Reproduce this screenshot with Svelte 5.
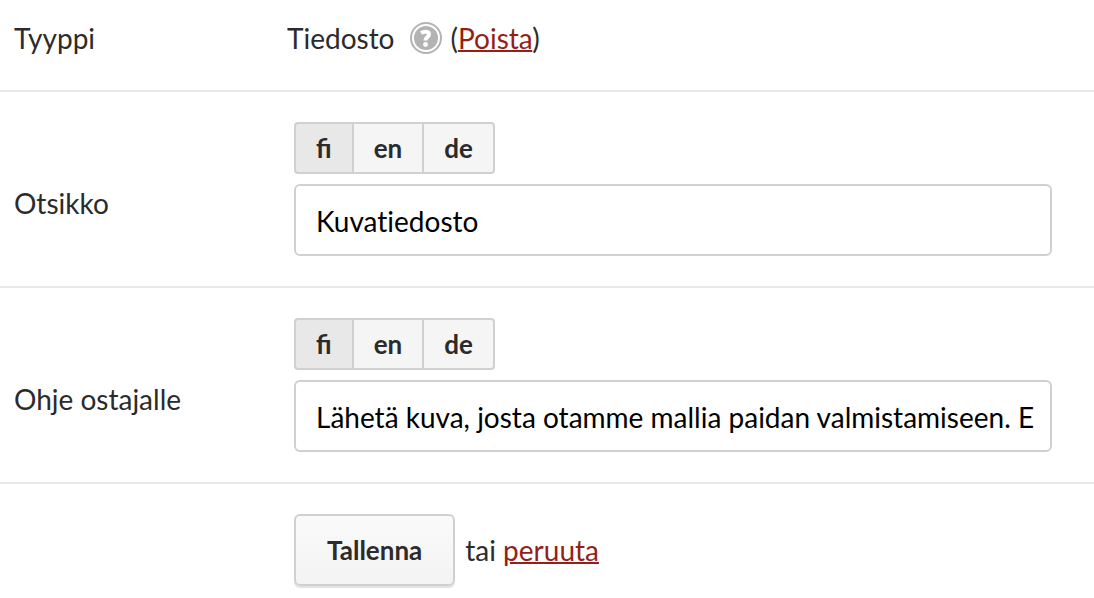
<script lang="ts">
  const languages = ['fi', 'en', 'de'];

  let fields = $state([
    { id: 'title', label: 'Otsikko', active: 'fi', value: 'Kuvatiedosto' },
    {
      id: 'help',
      label: 'Ohje ostajalle',
      active: 'fi',
      value: 'Lähetä kuva, josta otamme mallia paidan valmistamiseen. E'
    }
  ]);
</script>

<form class="settings" onsubmit={(e) => e.preventDefault()}>
  <div class="row type-row">
    <span>Tyyppi</span>
    <div class="type">
      <span>Tiedosto</span>
      <button type="button" class="help" aria-label="Ohje">
        <svg viewBox="0 0 32 32" aria-hidden="true">
          <circle cx="16" cy="16" r="15" fill="#fff" stroke="#b3b3b3" stroke-width="2" />
          <circle cx="16" cy="16" r="12" fill="#b3b3b3" />
          <path d="M11 11C14 9.300 19 9 19 12.200C19 15.200 15.500 14.800 15.500 18.500" fill="none" stroke="#fff" stroke-width="4" />
          <circle cx="15.500" cy="22.500" r="2.400" fill="#fff" />
        </svg>
      </button>
      <span>(<a href="#poista">Poista</a>)</span>
    </div>
  </div>

  {#each fields as field (field.id)}
    <div class="row">
      <label for={field.id}>{field.label}</label>
      <div class="content">
        <div class="languages">
          {#each languages as lang}
            <button
              type="button"
              class:active={field.active === lang}
              onclick={() => (field.active = lang)}
            >{lang}</button>
          {/each}
        </div>
        <input id={field.id} type="text" bind:value={field.value} />
      </div>
    </div>
  {/each}

  <div class="row actions-row">
    <div class="actions">
      <button type="submit" class="save">Tallenna</button>
      <span>tai <a href="#peruuta">peruuta</a></span>
    </div>
  </div>
</form>

<style>
  :global(body) {
    margin: 0;
    background: #fff;
  }

  .settings {
    color: #2b2b2b;
    font-family: Lato, sans-serif;
    font-size: 28px;
    line-height: 32px;
    overflow: hidden;
  }

  .row {
    display: grid;
    grid-template-columns: 280px 1fr;
    align-items: center;
    padding: 30px 42px 30px 14px;
    border-bottom: 2px solid #e8e8e8;
  }

  label {
    padding-top: 28px;
  }

  a {
    color: #941f18;
    text-decoration: underline;
    text-decoration-thickness: 2px;
  }

  .type-row {
    grid-template-columns: 273px 1fr;
    padding-top: 22px;
    padding-bottom: 36px;
  }

  .type {
    display: flex;
    align-items: center;
  }

  .help {
    width: 32px;
    height: 32px;
    margin: 0 8px 0 16px;
    padding: 0;
    border: 0;
    background: none;
    cursor: pointer;
  }

  .help svg {
    display: block;
  }

  .content {
    display: flex;
    flex-direction: column;
    gap: 10px;
  }

  .languages {
    display: flex;
  }

  .languages button {
    height: 52px;
    padding: 0 20px;
    border: 2px solid #d0d0d0;
    border-right-width: 0;
    background: #f5f5f5;
    color: #2b2b2b;
    font: bold 26px/32px Lato, sans-serif;
    cursor: pointer;
  }

  .languages button:first-child {
    border-radius: 4px 0 0 4px;
  }

  .languages button:last-child {
    border-right-width: 2px;
    border-radius: 0 4px 4px 0;
  }

  .languages .active {
    background: #e8e8e8;
  }

  input {
    box-sizing: border-box;
    width: 100%;
    height: 72px;
    padding: 2px 16px 0 20px;
    border: 2px solid #d0d0d0;
    border-radius: 6px;
    background: #fff;
    color: #000;
    font: 28px/32px Lato, sans-serif;
    font-variant-ligatures: none;
  }

  .actions-row {
    padding-bottom: 8px;
    border-bottom: 0;
  }

  .actions {
    display: flex;
    grid-column: 2;
    align-items: center;
    gap: 10px;
  }

  .save {
    height: 72px;
    padding: 0 31px;
    border: 2px solid #d0d0d0;
    border-radius: 6px;
    background: linear-gradient(#fafafa, #f3f3f3);
    box-shadow: 0 2px 0 #e2e2e2;
    color: #2b2b2b;
    font: bold 26px/32px Lato, sans-serif;
    cursor: pointer;
  }
</style>
